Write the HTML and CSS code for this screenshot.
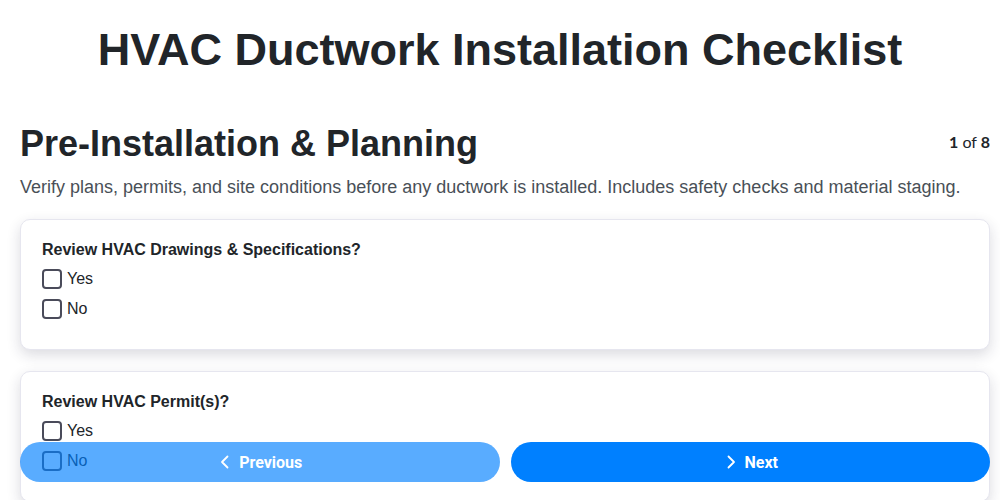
FILE: index.html
```html
<!DOCTYPE html>
<html lang="en">
  <head>
    <meta charset="UTF-8" />
    <meta name="viewport" content="width=device-width, initial-scale=1.0" />
    <title>HVAC Ductwork Installation Checklist</title>
    <link rel="stylesheet" href="styles.css">
  </head>
  <body>
    <h1 class="page-title">HVAC Ductwork Installation Checklist</h1>

    <div class="section-header">
      <h2 class="section-title">Pre-Installation &amp; Planning</h2>
      <span class="step-count"><b>1</b> of <b>8</b></span>
    </div>
    <p class="section-desc">
      Verify plans, permits, and site conditions before any ductwork is installed. Includes safety checks and material staging.
    </p>

    <div class="question-card">
      <h3 class="question">Review HVAC Drawings &amp; Specifications?</h3>
      <label class="option"><input type="checkbox" /> <span>Yes</span></label>
      <label class="option"><input type="checkbox" /> <span>No</span></label>
    </div>

    <div class="question-card">
      <h3 class="question">Review HVAC Permit(s)?</h3>
      <label class="option"><input type="checkbox" /> <span>Yes</span></label>
      <label class="option"><input type="checkbox" /> <span>No</span></label>
    </div>

    <div class="nav-buttons">
      <button class="nav-btn" disabled>
        <svg width="16" height="16" viewBox="0 0 16 16" fill="none" stroke="currentColor" stroke-width="1.8" stroke-linecap="round" stroke-linejoin="round"><path d="M10.5 2.5 5 8l5.5 5.5"/></svg>
        Previous
      </button>
      <button class="nav-btn">
        <svg width="16" height="16" viewBox="0 0 16 16" fill="none" stroke="currentColor" stroke-width="1.8" stroke-linecap="round" stroke-linejoin="round"><path d="M5.5 2.5 11 8l-5.5 5.5"/></svg>
        Next
      </button>
    </div>
  </body>
</html>
```

FILE: styles.css
```css
:root {
  --text-color: #212529;
  --muted-color: #495057;
  --primary-color: #0080ff;
  --border-color: #e6e6ef;
}

body {
  font-family: "Liberation Sans", Arial, sans-serif;
  color: var(--text-color);
  margin: 0;
  padding: 0 10px 80px 20px;
  background-color: #fff;
}

.page-title {
  text-align: center;
  font-size: 45px;
  margin: 23px 0 45px -10px;
  line-height: 1.2;
}

.section-header {
  display: flex;
  justify-content: space-between;
  align-items: center;
}

.section-title {
  font-size: 36px;
  margin: 0;
  line-height: 1.2;
}

.step-count {
  font-family: Lato, "Liberation Sans", sans-serif;
  font-size: 16px;
  margin-top: -4px;
}

.section-desc {
  font-size: 18px;
  color: var(--muted-color);
  margin: 11px 0 19px;
  line-height: 1.3;
}

.question-card {
  background-color: white;
  border: 1px solid var(--border-color);
  border-radius: 10px;
  box-shadow: 0 5px 14px rgba(30, 30, 60, 0.16);
  padding: 20px 21px 21px;
  margin-bottom: 21px;
  height: 88px;
}

.question {
  font-size: 16px;
  margin: 0 0 5px;
  line-height: 1.2;
}

.option {
  display: flex;
  align-items: center;
  gap: 5px;
  font-size: 16px;
  height: 30px;
}

.option input {
  appearance: none;
  width: 20px;
  height: 20px;
  margin: 0;
  border: 2px solid #4a4b5a;
  border-radius: 4px;
  background: white;
}

.nav-buttons {
  position: fixed;
  left: 20px;
  right: 10px;
  bottom: 18px;
  display: flex;
  gap: 11px;
}

.nav-btn {
  flex: 1;
  height: 40px;
  border: none;
  border-radius: 20px;
  background-color: var(--primary-color);
  color: white;
  font-family: Roboto, "Liberation Sans", sans-serif;
  font-weight: bold;
  font-size: 16px;
  display: flex;
  align-items: center;
  justify-content: center;
  gap: 6px;
}

.nav-btn:disabled {
  opacity: 0.65;
}
```
